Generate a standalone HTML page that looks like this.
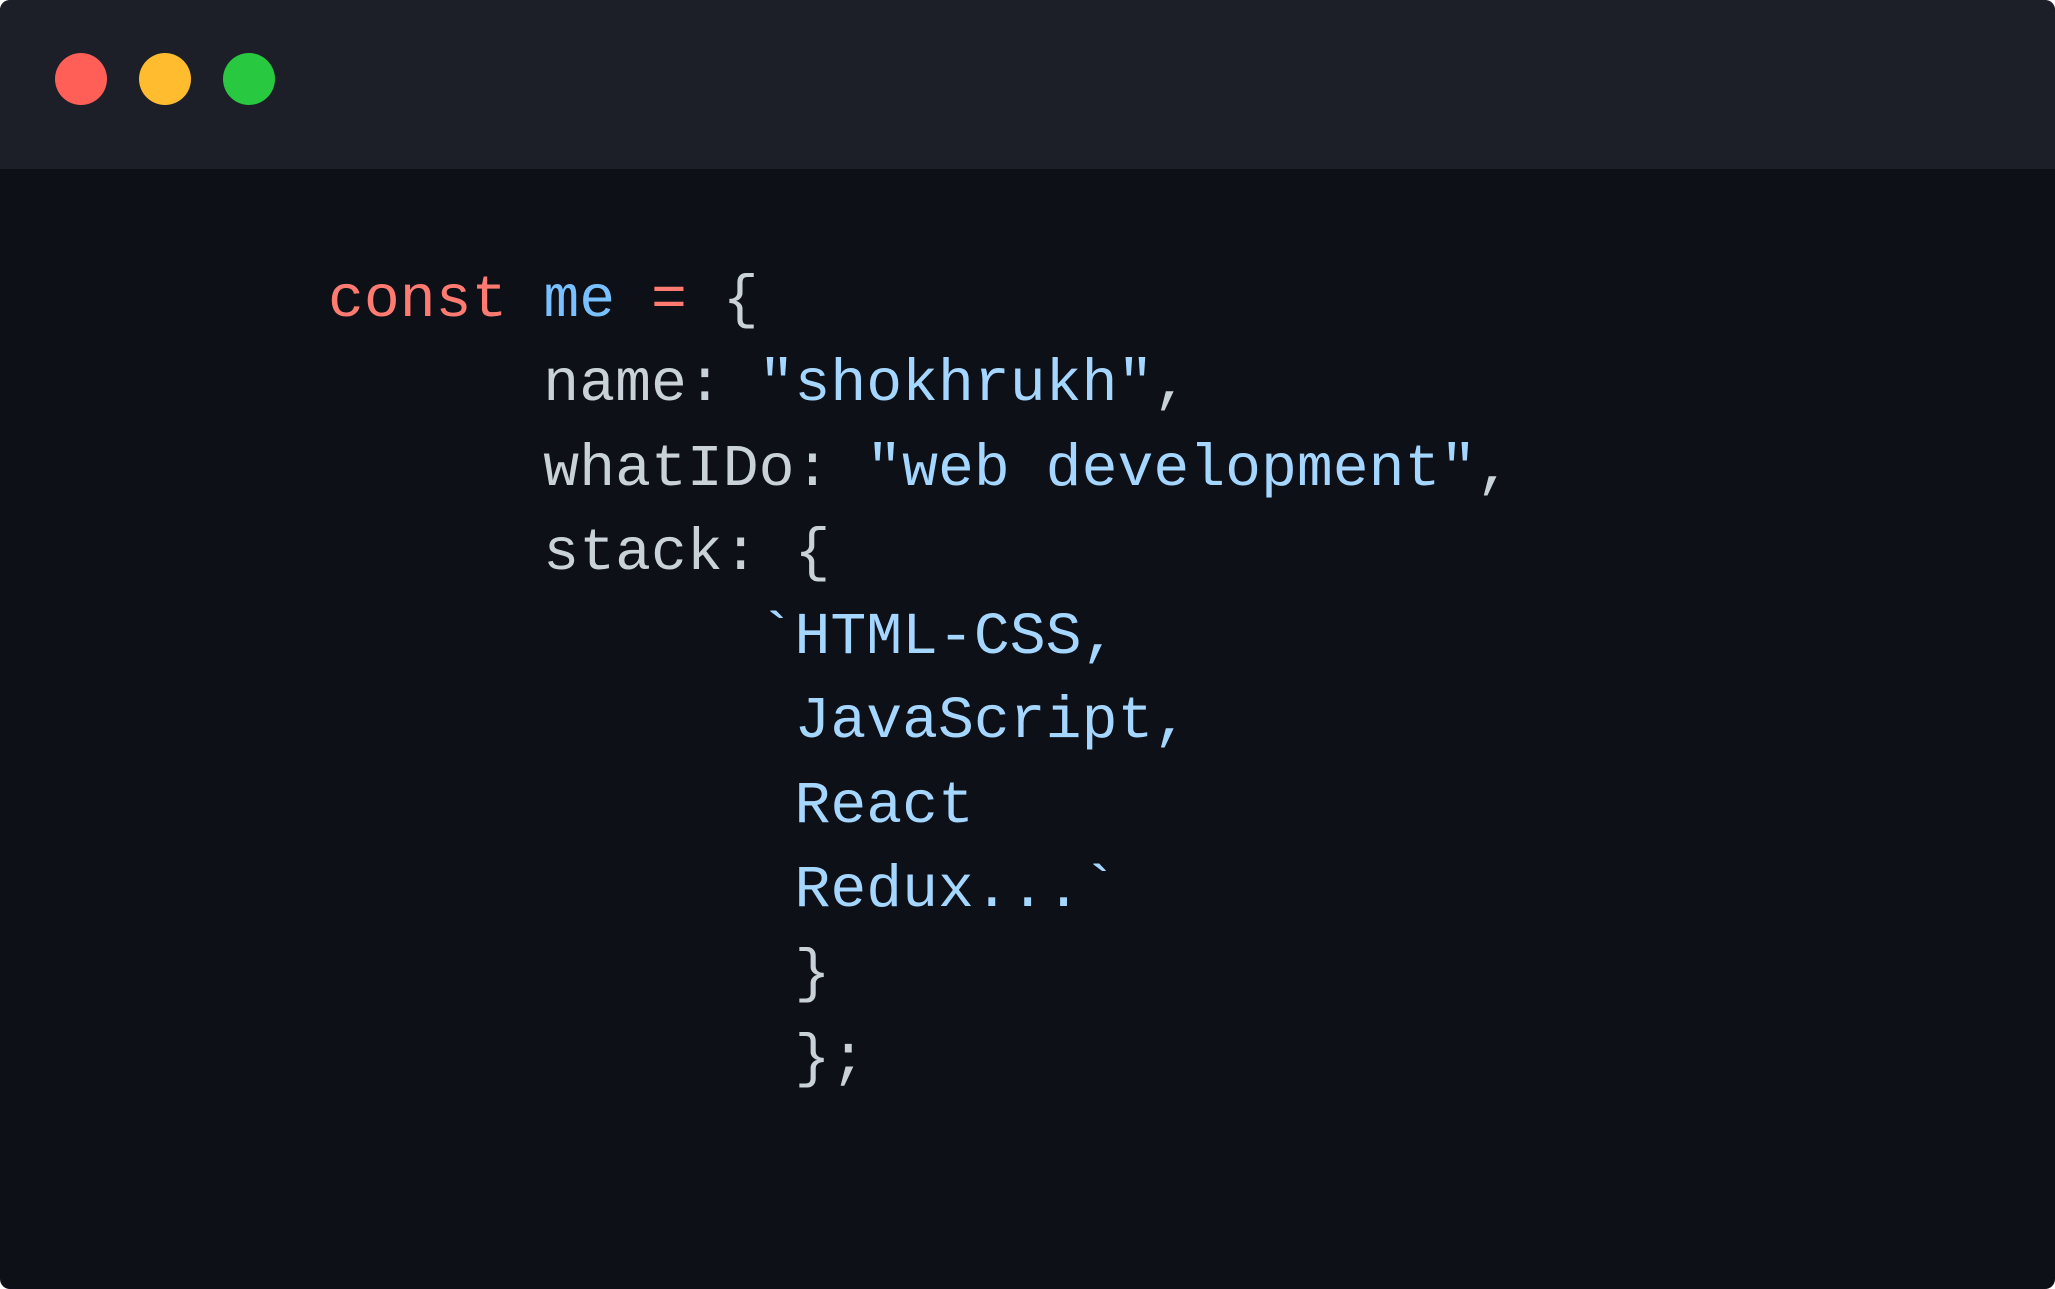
<!DOCTYPE html>
<html><head><meta charset="utf-8"><style>
html,body{margin:0;padding:0;background:#fff;}
.win{position:absolute;left:0;top:0;width:2055px;height:1289px;border-radius:10px;overflow:hidden;background:#0d1017;}
.bar{position:absolute;left:0;top:0;width:2055px;height:169px;background:#1c1f27;}
.dot{position:absolute;top:53px;width:52px;height:52px;border-radius:50%;}
pre{position:absolute;left:328px;top:258px;margin:0;font-family:"Liberation Mono",monospace;font-size:59.8px;line-height:84.3px;color:#c9d1d9;}
.k{color:#ff7b72}.v{color:#79c0ff}.s{color:#a5d6ff}
</style></head><body>
<div class="win">
<div class="bar">
<div class="dot" style="left:55px;background:#ff5f57"></div>
<div class="dot" style="left:139px;background:#febc2e"></div>
<div class="dot" style="left:223px;background:#28c840"></div>
</div>
<pre><span class="k">const</span> <span class="v">me</span> <span class="k">=</span> {
      name: <span class="s">"shokhrukh"</span>,
      whatIDo: <span class="s">"web development"</span>,
      stack: {
            <span class="s">`HTML-CSS,</span>
<span class="s">             JavaScript,</span>
<span class="s">             React</span>
<span class="s">             Redux...`</span>
             }
             };</pre>
</div>
</body></html>
